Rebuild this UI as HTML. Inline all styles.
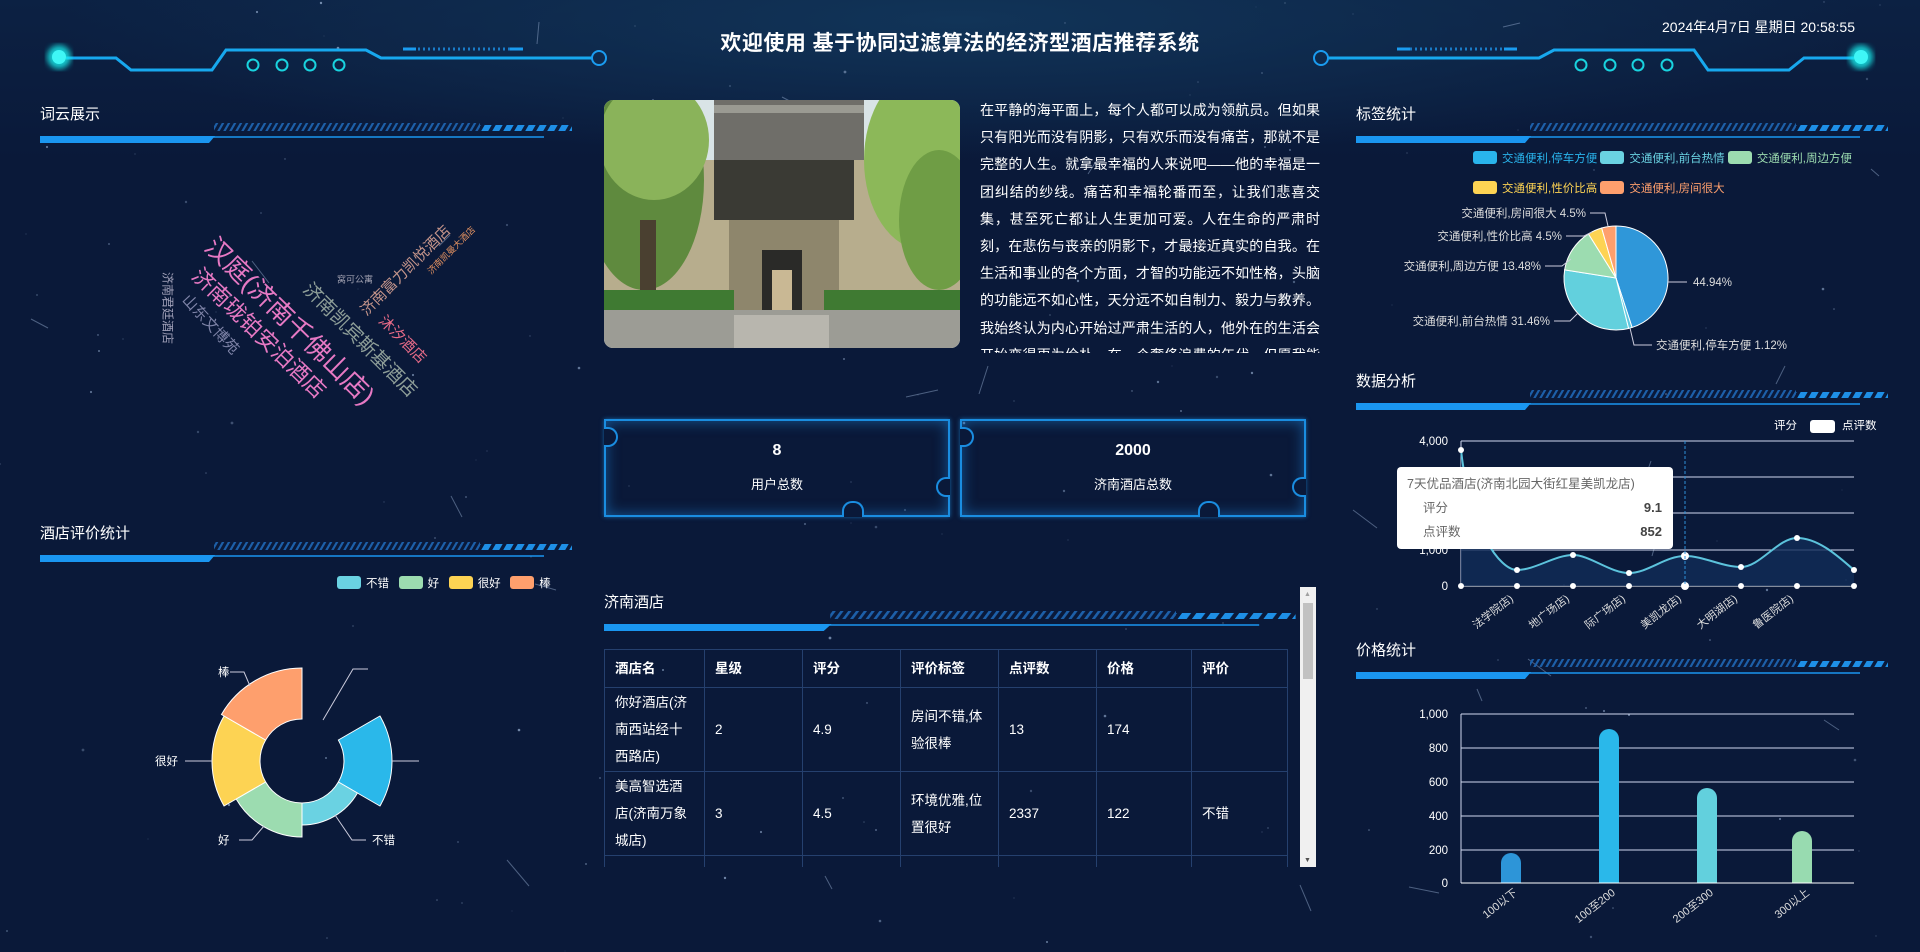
<!DOCTYPE html>
<html><head><meta charset="utf-8">
<style>
*{margin:0;padding:0;box-sizing:border-box}
body{width:1920px;height:952px;overflow:hidden;background:#0a1939;font-family:"Liberation Sans","Noto Sans CJK SC",sans-serif;color:#fff;position:relative}
.bg{position:absolute;left:0;top:0;width:1920px;height:952px;background:radial-gradient(ellipse 900px 140px at 960px 20px,#113458 0%,rgba(10,25,57,0) 100%),linear-gradient(#0c2143 0,#0a1939 160px)}
.abs{position:absolute}
.t{position:absolute;font-size:15px;color:#fff}
.para{position:absolute;left:980px;top:97px;width:340px;height:256px;overflow:hidden;font-size:14px;line-height:27.2px;color:#fff;text-align:justify}
.stat{position:absolute;top:419px;width:346px;height:98px;border:2px solid #1a8de0;box-shadow:inset 0 0 14px rgba(30,140,230,.55),0 0 4px rgba(30,150,240,.6);text-align:center}
.stat b{display:block;font-size:16px;margin-top:21px}
.stat span{display:block;font-size:13px;margin-top:14px}
.notch{position:absolute;background:#0a1939;border:2px solid #1a8de0}
table{position:absolute;left:604px;top:649px;width:684px;border-collapse:collapse;font-size:13.5px}
td,th{border:1px solid #25406e;text-align:left;padding:0 0 0 10px;vertical-align:middle;line-height:27px;font-weight:normal}
th{height:38px;font-weight:bold}
td{height:84px}
.lg{display:inline-block;width:24px;height:13px;border-radius:3px;vertical-align:-2px;margin-right:5px}
</style></head><body>
<div class="bg"></div>
<svg class="abs" style="left:0;top:0" width="1920" height="952" id="stars"></svg>

<!-- header -->
<svg class="abs" style="left:0;top:0" width="1920" height="90">
<defs><filter id="gl"><feGaussianBlur stdDeviation="3"/></filter></defs>
<g id="hl" fill="none">
<polyline points="66,58 116,58 131,70 212,70 226,50 366,50 381,58 592,58" stroke="#17a8ee" stroke-width="3"/>
<circle cx="599" cy="58" r="7" stroke="#1a9cf0" stroke-width="2"/>
<circle cx="253" cy="65" r="5.5" stroke="#19d3df" stroke-width="2"/>
<circle cx="282" cy="65" r="5.5" stroke="#19d3df" stroke-width="2"/>
<circle cx="310" cy="65" r="5.5" stroke="#19d3df" stroke-width="2"/>
<circle cx="339" cy="65" r="5.5" stroke="#19d3df" stroke-width="2"/>
<line x1="403" y1="49" x2="523" y2="49" stroke="#1a7cc8" stroke-width="3" stroke-dasharray="2 3"/>
<line x1="403" y1="49" x2="416" y2="49" stroke="#1a9cf0" stroke-width="3"/>
<line x1="510" y1="49" x2="523" y2="49" stroke="#1a9cf0" stroke-width="3"/>
<circle cx="59" cy="57" r="12" fill="#18f0f0" filter="url(#gl)" opacity=".8"/>
<circle cx="59" cy="57" r="7" fill="#3ff6f6"/>
</g>
<use href="#hl" transform="translate(1920,0) scale(-1,1)"/>
</svg>
<div class="t" style="left:0;width:1920px;text-align:center;top:27px;font-size:21px;font-weight:bold;letter-spacing:.5px">欢迎使用 基于协同过滤算法的经济型酒店推荐系统</div>
<div class="t" style="left:1662px;top:17px;font-size:14px">2024年4月7日 星期日 20:58:55</div>

<!-- section headers -->
<svg width="0" height="0" style="position:absolute"><defs>
<pattern id="st" width="6" height="8" patternUnits="userSpaceOnUse" patternTransform="skewX(-30)"><rect width="2.5" height="8" fill="#1d5fa8"/></pattern>
<pattern id="sd" width="11" height="8" patternUnits="userSpaceOnUse" patternTransform="skewX(-30)"><rect width="7" height="8" fill="#1e8fe6"/></pattern>
<g id="sh">
<rect x="174" y="28" width="266" height="8" fill="url(#st)"/>
<rect x="440" y="30" width="92" height="6" fill="url(#sd)"/>
<polygon points="0,41 175,41 169,48 0,48" fill="#1a96f0"/>
<line x1="170" y1="42" x2="504" y2="42" stroke="#1a96f0" stroke-width="1.5"/>
</g></defs></svg>
<svg class="abs" style="left:40px;top:95px" width="540" height="55"><use href="#sh"/></svg>
<div class="t" style="left:40px;top:103px">词云展示</div>
<svg class="abs" style="left:40px;top:514px" width="540" height="55"><use href="#sh"/></svg>
<div class="t" style="left:40px;top:522px">酒店评价统计</div>
<svg class="abs" style="left:1356px;top:95px" width="540" height="55"><use href="#sh"/></svg>
<div class="t" style="left:1356px;top:103px">标签统计</div>
<svg class="abs" style="left:1356px;top:362px" width="540" height="55"><use href="#sh"/></svg>
<div class="t" style="left:1356px;top:370px">数据分析</div>
<svg class="abs" style="left:1356px;top:631px" width="540" height="55"><use href="#sh"/></svg>
<div class="t" style="left:1356px;top:639px">价格统计</div>
<svg class="abs" style="left:604px;top:583px" width="700" height="55"><g transform="scale(1.3,1)"><use href="#sh"/></g></svg>
<div class="t" style="left:604px;top:591px">济南酒店</div>

<!-- word cloud -->
<div class="abs" style="left:3px;top:-3px;width:600px;height:500px;font-family:'Liberation Sans','Noto Sans CJK SC',sans-serif">
<div class="abs" style="left:288px;top:323px;transform:translate(-50%,-50%) rotate(44.5deg);font-size:26px;color:#e779c4;white-space:nowrap">汉庭(济南千佛山店)</div>
<div class="abs" style="left:257px;top:335px;transform:translate(-50%,-50%) rotate(44deg);font-size:22px;color:#e779c4;white-space:nowrap">济南珑铂安泊酒店</div>
<div class="abs" style="left:208px;top:327px;transform:translate(-50%,-50%) rotate(47deg);font-size:15px;color:#7f84a8;white-space:nowrap">山东文博苑</div>
<div class="abs" style="left:165px;top:311px;transform:translate(-50%,-50%) rotate(90deg);font-size:12px;color:#a0a0b8;white-space:nowrap">济南君廷酒店</div>
<div class="abs" style="left:358px;top:342px;transform:translate(-50%,-50%) rotate(45deg);font-size:19px;color:#8e9e98;white-space:nowrap">济南凯宾斯基酒店</div>
<div class="abs" style="left:402px;top:273px;transform:translate(-50%,-50%) rotate(-45deg);font-size:15px;color:#c4948a;white-space:nowrap">济南富力凯悦酒店</div>
<div class="abs" style="left:400px;top:342px;transform:translate(-50%,-50%) rotate(45deg);font-size:15px;color:#e86b88;white-space:nowrap">沐汐酒店</div>
<div class="abs" style="left:448px;top:253px;transform:translate(-50%,-50%) rotate(-45deg);font-size:9px;color:#e09060;white-space:nowrap">济南凯曼大酒店</div>
<div class="abs" style="left:352px;top:282px;transform:translate(-50%,-50%);font-size:9px;color:#a0a0b0;white-space:nowrap">窝可公寓</div>
</div>

<!-- rose chart -->
<div class="t" style="left:337px;top:575px;font-size:11.5px"><span class="lg" style="background:#6ad2e2"></span>不错 &nbsp;&nbsp;<span class="lg" style="background:#9cdcb0"></span>好 &nbsp;&nbsp;<span class="lg" style="background:#fdd353"></span>很好 &nbsp;&nbsp;<span class="lg" style="background:#fe9f6d"></span>棒</div>
<svg class="abs" style="left:130px;top:637px" width="300" height="240" id="rose"></svg>

<!-- picture -->
<svg class="abs" style="left:604px;top:100px" width="356" height="248">
<defs><clipPath id="pc"><rect width="356" height="248" rx="9"/></clipPath></defs>
<g clip-path="url(#pc)">
<rect width="356" height="248" fill="#d9e4e6"/>
<rect x="110" y="0" width="150" height="60" fill="#6f6e69"/>
<rect x="110" y="5" width="150" height="8" fill="#9a9a92"/>
<rect x="0" y="60" width="356" height="150" fill="#b7ad8d"/>
<rect x="110" y="60" width="140" height="60" fill="#3a3a34"/>
<rect x="125" y="120" width="110" height="100" fill="#8e866c"/>
<rect x="158" y="150" width="40" height="75" fill="#2a2a28"/>
<rect x="168" y="170" width="20" height="40" fill="#c9b894"/>
<ellipse cx="40" cy="80" rx="60" ry="110" fill="#5f8a3e"/>
<ellipse cx="50" cy="40" rx="55" ry="60" fill="#8ab35a"/>
<rect x="36" y="120" width="16" height="100" fill="#4a4030"/>
<ellipse cx="320" cy="60" rx="60" ry="90" fill="#8cb859"/>
<ellipse cx="335" cy="120" rx="40" ry="70" fill="#6f9d45"/>
<rect x="0" y="190" width="130" height="30" fill="#3f7a32"/>
<rect x="220" y="190" width="136" height="30" fill="#3f7a32"/>
<rect x="0" y="210" width="356" height="38" fill="#9c9c95"/>
<rect x="130" y="215" width="95" height="33" fill="#b8b6ae"/>
</g></svg>
<div class="para">在平静的海平面上，每个人都可以成为领航员。但如果只有阳光而没有阴影，只有欢乐而没有痛苦，那就不是完整的人生。就拿最幸福的人来说吧——他的幸福是一团纠结的纱线。痛苦和幸福轮番而至，让我们悲喜交集，甚至死亡都让人生更加可爱。人在生命的严肃时刻，在悲伤与丧亲的阴影下，才最接近真实的自我。在生活和事业的各个方面，才智的功能远不如性格，头脑的功能远不如心性，天分远不如自制力、毅力与教养。我始终认为内心开始过严肃生活的人，他外在的生活会开始变得更为俭朴。在一个奢侈浪费的年代，但愿我能让世人了解：人类真正的需求是多么的稀少。</div>

<!-- stats -->
<div class="stat" style="left:604px"><b>8</b><span>用户总数</span>
<div class="notch" style="left:-2px;top:6px;width:14px;height:20px;border-left:none;border-radius:0 10px 10px 0"></div>
<div class="notch" style="right:-2px;top:56px;width:14px;height:20px;border-right:none;border-radius:10px 0 0 10px"></div>
<div class="notch" style="left:236px;bottom:-2px;width:22px;height:16px;border-bottom:none;border-radius:10px 10px 0 0"></div></div>
<div class="stat" style="left:960px"><b>2000</b><span>济南酒店总数</span>
<div class="notch" style="left:-2px;top:6px;width:14px;height:20px;border-left:none;border-radius:0 10px 10px 0"></div>
<div class="notch" style="right:-2px;top:56px;width:14px;height:20px;border-right:none;border-radius:10px 0 0 10px"></div>
<div class="notch" style="left:236px;bottom:-2px;width:22px;height:16px;border-bottom:none;border-radius:10px 10px 0 0"></div></div>

<!-- table -->
<div class="abs" style="left:604px;top:649px;width:684px;height:218px;overflow:hidden">
<table style="left:0;top:0">
<tr><th style="width:100px">酒店名</th><th style="width:98px">星级</th><th style="width:98px">评分</th><th style="width:98px">评价标签</th><th style="width:98px">点评数</th><th style="width:95px">价格</th><th>评价</th></tr>
<tr><td>你好酒店(济<br>南西站经十<br>西路店)</td><td>2</td><td>4.9</td><td>房间不错,体<br>验很棒</td><td>13</td><td>174</td><td></td></tr>
<tr><td>美高智选酒<br>店(济南万象<br>城店)</td><td>3</td><td>4.5</td><td>环境优雅,位<br>置很好</td><td>2337</td><td>122</td><td>不错</td></tr>
<tr><td>&nbsp;</td><td></td><td></td><td></td><td></td><td></td><td></td></tr>
</table></div>
<div class="abs" style="left:1300px;top:587px;width:16px;height:280px;background:#f0f0f0">
<div class="abs" style="left:3px;top:16px;width:10px;height:76px;background:#c1c1c1"></div>
<div class="abs" style="left:4px;top:4px;font-size:7px;color:#a0a0a0">▲</div>
<div class="abs" style="left:4px;bottom:3px;font-size:7px;color:#505050">▼</div></div>

<!-- tag pie -->
<div class="t" style="left:1473px;top:150px;font-size:11.5px;color:#29b0ef;white-space:nowrap"><span class="lg" style="background:#29b4ec"></span><span style="color:#29b4ec">交通便利,停车方便</span> <span class="lg" style="background:#6ad2e2"></span><span style="color:#6ad2e2">交通便利,前台热情</span> <span class="lg" style="background:#9cdcb0"></span><span style="color:#9cdcb0">交通便利,周边方便</span></div>
<div class="t" style="left:1473px;top:180px;font-size:11.5px;white-space:nowrap"><span class="lg" style="background:#fdd353"></span><span style="color:#fdd353">交通便利,性价比高</span> <span class="lg" style="background:#fe9f6d"></span><span style="color:#fe9f6d">交通便利,房间很大</span></div>
<svg class="abs" style="left:1390px;top:195px" width="500" height="160" id="tp" font-size="11.5" fill="#ddd"></svg>

<!-- line chart -->
<svg class="abs" style="left:1390px;top:420px" width="500" height="215" font-size="12" fill="#fff">
<text x="384" y="9" font-size="11.5">评分</text><rect x="420" y="0" width="25" height="13" rx="3" fill="#fff"/><text x="452" y="9" font-size="11.5">点评数</text>
<g stroke="#d0d8ee" stroke-width="1"><line x1="71" y1="21" x2="464" y2="21"/><line x1="71" y1="57" x2="464" y2="57"/><line x1="71" y1="93" x2="464" y2="93"/><line x1="71" y1="130" x2="464" y2="130"/><line x1="71" y1="166" x2="464" y2="166" stroke="#fff"/><line x1="71" y1="21" x2="71" y2="166"/></g>
<g text-anchor="end" font-size="11.5"><text x="58" y="25">4,000</text><text x="58" y="134">1,000</text><text x="58" y="170">0</text></g>
<path d="M71,30 C80,110 110,150 127,150 C145,150 165,135 183,135 C200,135 220,153 239,153 C258,153 275,136 295,136 C314,136 332,147 351,147 C370,147 388,118 407,118 C430,118 452,140 464,150 L464,166 L71,166Z" fill="#102c58" opacity=".8"/>
<path d="M71,30 C80,110 110,150 127,150 C145,150 165,135 183,135 C200,135 220,153 239,153 C258,153 275,136 295,136 C314,136 332,147 351,147 C370,147 388,118 407,118 C430,118 452,140 464,150" fill="none" stroke="#5cc3dc" stroke-width="2"/>
<g fill="#fff"><circle cx="71" cy="30" r="3"/><circle cx="127" cy="150" r="3"/><circle cx="183" cy="135" r="3"/><circle cx="239" cy="153" r="3"/><circle cx="295" cy="136" r="4"/><circle cx="351" cy="147" r="3"/><circle cx="407" cy="118" r="3"/><circle cx="464" cy="150" r="3"/>
<circle cx="71" cy="166" r="3"/><circle cx="127" cy="166" r="3"/><circle cx="183" cy="166" r="3"/><circle cx="239" cy="166" r="3"/><circle cx="295" cy="166" r="4"/><circle cx="351" cy="166" r="3"/><circle cx="407" cy="166" r="3"/><circle cx="464" cy="166" r="3"/></g>
<line x1="295" y1="21" x2="295" y2="166" stroke="#2d8fd8" stroke-dasharray="3 2"/>
<g font-size="11" fill="#ddd"><text transform="translate(124,180) rotate(-38)" text-anchor="end">法学院店)</text><text transform="translate(180,180) rotate(-38)" text-anchor="end">地广场店)</text><text transform="translate(236,180) rotate(-38)" text-anchor="end">际广场店)</text><text transform="translate(292,180) rotate(-38)" text-anchor="end">美凯龙店)</text><text transform="translate(348,180) rotate(-38)" text-anchor="end">大明湖店)</text><text transform="translate(404,180) rotate(-38)" text-anchor="end">鲁医院店)</text></g>
<rect x="7" y="47" width="276" height="82" rx="4" fill="#fff"/>
<text x="17" y="68" fill="#666" font-size="12.5">7天优品酒店(济南北园大街红星美凯龙店)</text>
<text x="33" y="92" fill="#666" font-size="12.5">评分</text><text x="272" y="92" fill="#444" font-size="13" font-weight="bold" text-anchor="end">9.1</text>
<text x="33" y="116" fill="#666" font-size="12.5">点评数</text><text x="272" y="116" fill="#444" font-size="13" font-weight="bold" text-anchor="end">852</text>
</svg>

<!-- bar chart -->
<svg class="abs" style="left:1390px;top:700px" width="500" height="252" font-size="11.5" fill="#fff">
<defs><clipPath id="bc"><rect x="0" y="0" width="500" height="183"/></clipPath></defs>
<g stroke="#d0d8ee"><line x1="71" y1="14" x2="464" y2="14"/><line x1="71" y1="48" x2="464" y2="48"/><line x1="71" y1="82" x2="464" y2="82"/><line x1="71" y1="116" x2="464" y2="116"/><line x1="71" y1="150" x2="464" y2="150"/><line x1="71" y1="14" x2="71" y2="183"/></g>
<g text-anchor="end"><text x="58" y="18">1,000</text><text x="58" y="52">800</text><text x="58" y="86">600</text><text x="58" y="120">400</text><text x="58" y="154">200</text><text x="58" y="187">0</text></g>
<g clip-path="url(#bc)">
<rect x="111" y="153" width="20" height="50" rx="10" fill="#2d95d8"/>
<rect x="209" y="29" width="20" height="170" rx="10" fill="#2ab8ea"/>
<rect x="307" y="88" width="20" height="110" rx="10" fill="#62d0dd"/>
<rect x="402" y="131" width="20" height="70" rx="10" fill="#98dbb0"/>
</g>
<line x1="71" y1="183" x2="464" y2="183" stroke="#fff"/>
<g font-size="11" fill="#ddd"><text transform="translate(128,194) rotate(-38)" text-anchor="end">100以下</text><text transform="translate(226,194) rotate(-38)" text-anchor="end">100至200</text><text transform="translate(324,194) rotate(-38)" text-anchor="end">200至300</text><text transform="translate(420,194) rotate(-38)" text-anchor="end">300以上</text></g>
</svg>

<script>
function arc(cx,cy,r0,r1,a0,a1){var R=Math.PI/180;function p(r,a){return [cx+r*Math.sin(a*R),cy-r*Math.cos(a*R)]}
var l=(a1-a0)>180?1:0,A=p(r1,a0),B=p(r1,a1),C=p(r0,a1),D=p(r0,a0);
return 'M'+A+' A'+r1+','+r1+' 0 '+l+' 1 '+B+' L'+C+(r0>0?' A'+r0+','+r0+' 0 '+l+' 0 '+D:'')+'Z';}
var rs='',cx=172,cy=124,sl=[[60,120,90,'#2ab8ea'],[120,180,64,'#6ad2e2'],[180,240,76,'#9cdcb0'],[240,300,90,'#fdd353'],[300,360,93,'#fe9f6d']];
sl.forEach(function(s){rs+='<path d="'+arc(cx,cy,42,s[2],s[0],s[1])+'" fill="'+s[3]+'" stroke="#fff" stroke-width="1"/>';});
rs+='<g stroke="#ccd" fill="none"><polyline points="193,83 223,32 238,32"/><polyline points="262,124 289,124"/><polyline points="205,178 222,203 236,203"/><polyline points="134,189 122,203 109,203"/><polyline points="82,124 55,124"/><polyline points="120,49 114,35 100,35"/></g>';
rs+='<g fill="#fff" font-size="11.5"><text x="242" y="207">不错</text><text x="88" y="207">好</text><text x="25" y="128">很好</text><text x="88" y="39">棒</text></g>';
document.getElementById('rose').innerHTML=rs;
var ts='',px=226,py=83,ps=[[0,162,'#2f97d9'],[162,166,'#5cc8e0'],[166,279,'#62d0dd'],[279,328,'#9cdcb0'],[328,344,'#fdd353'],[344,360,'#fe9f6d']];
ps.forEach(function(s){ts+='<path d="'+arc(px,py,0,52,s[0],s[1])+'" fill="'+s[2]+'" stroke="#fff" stroke-width="1"/>';});
ts+='<g stroke="#ccd" fill="none"><polyline points="278,87 297,87"/><polyline points="240,133 244,150 262,150"/><polyline points="188,118 180,126 164,126"/><polyline points="181,64 172,71 155,71"/><polyline points="202,37 194,41 176,41"/><polyline points="218,31 215,18 200,18"/></g>';
ts+='<text x="303" y="91">44.94%</text><text x="266" y="154">交通便利,停车方便 1.12%</text><text x="160" y="130" text-anchor="end">交通便利,前台热情 31.46%</text><text x="151" y="75" text-anchor="end">交通便利,周边方便 13.48%</text><text x="172" y="45" text-anchor="end">交通便利,性价比高 4.5%</text><text x="196" y="22" text-anchor="end">交通便利,房间很大 4.5%</text>';
document.getElementById('tp').innerHTML=ts;
var s='',seed=7;function rnd(){seed=(seed*9301+49297)%233280;return seed/233280;}
for(var i=0;i<160;i++){var x=rnd()*1920,y=rnd()*952;s+='<circle cx="'+x.toFixed(0)+'" cy="'+y.toFixed(0)+'" r="'+(rnd()*1+.4).toFixed(1)+'" fill="#8fa6c8" opacity="'+(rnd()*.5+.3).toFixed(2)+'"/>';}
for(var j=0;j<25;j++){var x=rnd()*1920,y=rnd()*952,a=rnd()*6.28,l=10+rnd()*25;s+='<line x1="'+x.toFixed(0)+'" y1="'+y.toFixed(0)+'" x2="'+(x+l*Math.cos(a)).toFixed(0)+'" y2="'+(y+l*Math.sin(a)).toFixed(0)+'" stroke="#8fa6c8" opacity=".5"/>';}
document.getElementById('stars').innerHTML=s;
</script>
</body></html>
